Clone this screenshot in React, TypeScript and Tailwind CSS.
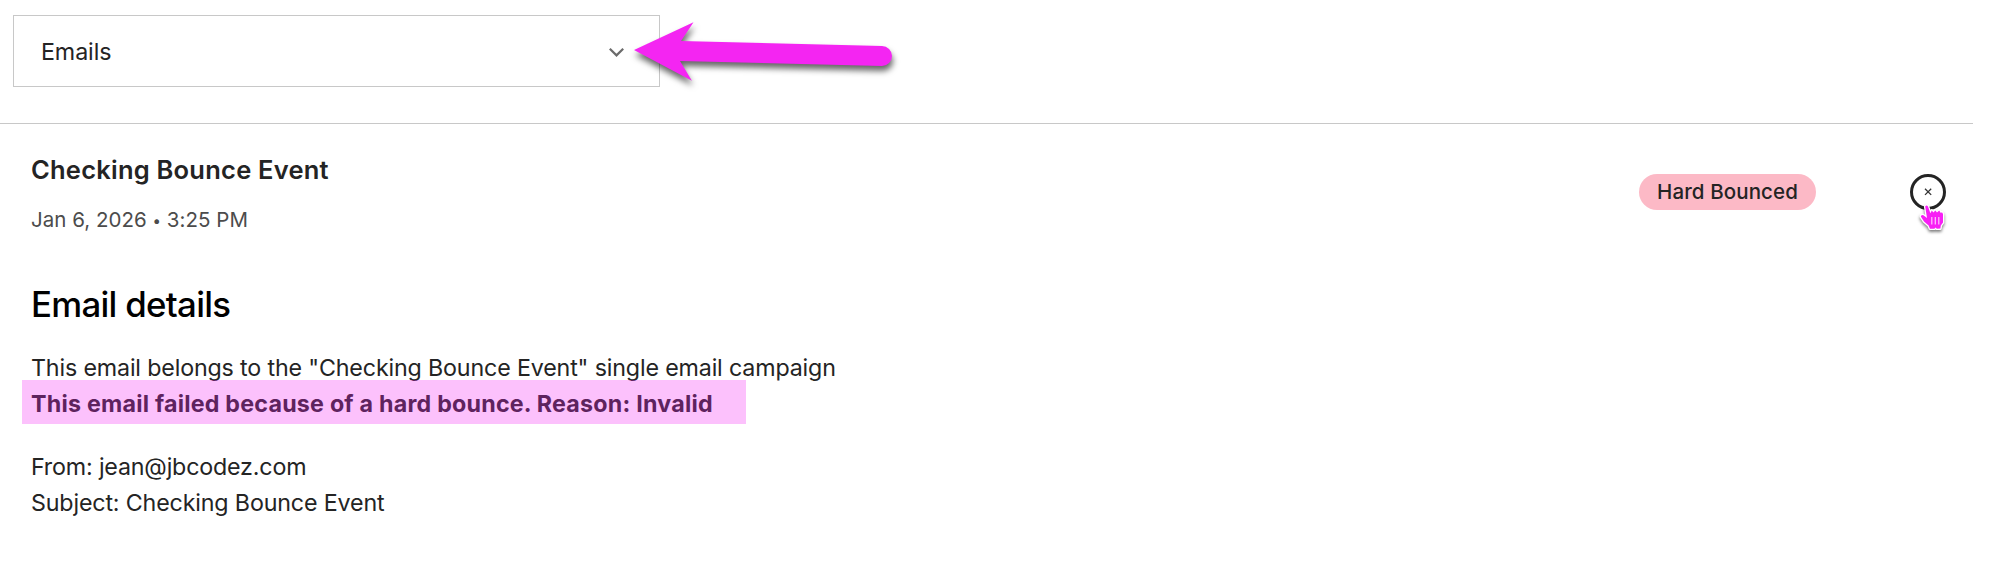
import React from 'react';

// Big pointer arrow laid over the filter box
const PinkArrow: React.FC = () => (
    <svg
        className="absolute left-[630px] top-[22px] drop-shadow-[1px_5px_3px_rgba(0,0,0,0.6)]"
        width="300"
        height="100"
        viewBox="0 0 300 100"
        fill="#f425f2"
    >
        <path d="M4 28 L63.5 0.3 L51 19 L252 24 A10 10 0 0 1 252 44 L50 39 L61.9 58.7 Z" />
    </svg>
);

// Hand cursor resting on the close button
const HandCursor: React.FC = () => (
    <svg
        className="absolute left-[7px] top-[28px] drop-shadow-[0_2px_1.5px_rgba(0,0,0,0.5)]"
        width="32"
        height="34"
        viewBox="0 0 32 34"
    >
        <path
            d="M8.2 4.6 Q9.6 2.2 11 4.6 L13.4 11.2 L14.8 8.4 L16.4 10.6 L18.4 8.4 L20 10.6 L22.2 8.4 L23.8 11 L25 10.2 L26 12 L26 20.5 L23.8 23.5 L23.4 26.6 L19.8 26.8 L18.6 25.6 L17.4 26.8 L13 26.8 L11.6 23.6 L7 19.6 L3.8 14.6 Q4 12.6 6.4 13.2 L10 16 Z"
            fill="#f81ff5"
            stroke="#fff"
            strokeWidth="2.6"
            strokeLinejoin="round"
            paintOrder="stroke"
        />
        <path d="M14.8 15v7.5M18.3 15v7.5M21.8 15v7.5" stroke="#ffc4fe" strokeWidth="1.2" />
    </svg>
);

const FilterSelect: React.FC<{ value: string }> = ({ value }) => (
    <div className="flex h-[72px] w-[647px] items-center justify-between border border-[#c8c8c8] pl-[27px] pr-[35.5px] pt-0.5">
        <span className="text-[23.25px] leading-9 tracking-[-0.1px]">{value}</span>
        <svg width="15" height="9" viewBox="0 0 15 9" fill="none" stroke="#6b6b6b" strokeWidth="2.2">
            <path d="M0.8 0.8 L7.5 7.4 L14.2 0.8" />
        </svg>
    </div>
);

export default function App() {
    return (
        <div className="relative h-[576px] w-[2004px] overflow-hidden bg-white font-['Inter',sans-serif] text-[#242424]">
            <div className="w-[1973px] border-b border-[#c8c8c8] pb-9 pl-[13px] pt-[15px]">
                <FilterSelect value="Emails" />
            </div>
            <PinkArrow />

            <div className="flex w-[1973px] justify-between pl-[31px] pr-[27px]">
                <div className="pt-[28px]">
                    <h2 className="text-[25.5px] font-semibold leading-9 tracking-[0.23px]">Checking Bounce Event</h2>
                    <p className="mt-4 text-[20.5px] leading-8 tracking-[0.03px] text-[#4c4c4c]">
                        Jan 6, 2026 <span className="relative -top-px text-[15px]">•</span> 3:25 PM
                    </p>
                </div>
                <div className="flex items-start gap-[94px] pt-[50px]">
                    <span className="flex h-9 w-[177px] items-center justify-center rounded-full bg-[#fcb9c6] text-[20.5px] font-medium leading-9 tracking-[0.1px]">
                        Hard Bounced
                    </span>
                    <div className="relative">
                        <button className="flex size-9 items-center justify-center rounded-full border-3 border-[#242424]">
                            <svg width="8" height="8" viewBox="0 0 8 8" stroke="#333" strokeWidth="1.3">
                                <path d="M1 0.7 L7.2 6.9 M7.2 0.7 L1 6.9" />
                            </svg>
                        </button>
                        <HandCursor />
                    </div>
                </div>
            </div>

            <section className="pl-[31px] pt-[42px] text-[23.25px] leading-9">
                <h1 className="text-[34.8px] font-medium leading-[48px] tracking-[-0.7px] text-black">Email details</h1>
                <div className="relative mt-[22px]">
                    <p className="tracking-[-0.16px]">
                        This email belongs to the "Checking Bounce Event" single email campaign
                    </p>
                    <p className="font-bold tracking-[0.22px]">
                        This email failed because of a hard bounce. Reason: Invalid
                    </p>
                    {/* highlighter strip over the failure reason */}
                    <div className="absolute -left-[9px] top-[30px] h-11 w-[724px] bg-[#f320f3]/28" />
                </div>
                <p className="mt-[27px] tracking-[-0.18px]">From: jean@jbcodez.com</p>
                <p className="tracking-[-0.16px]">Subject: Checking Bounce Event</p>
            </section>
        </div>
    );
}
